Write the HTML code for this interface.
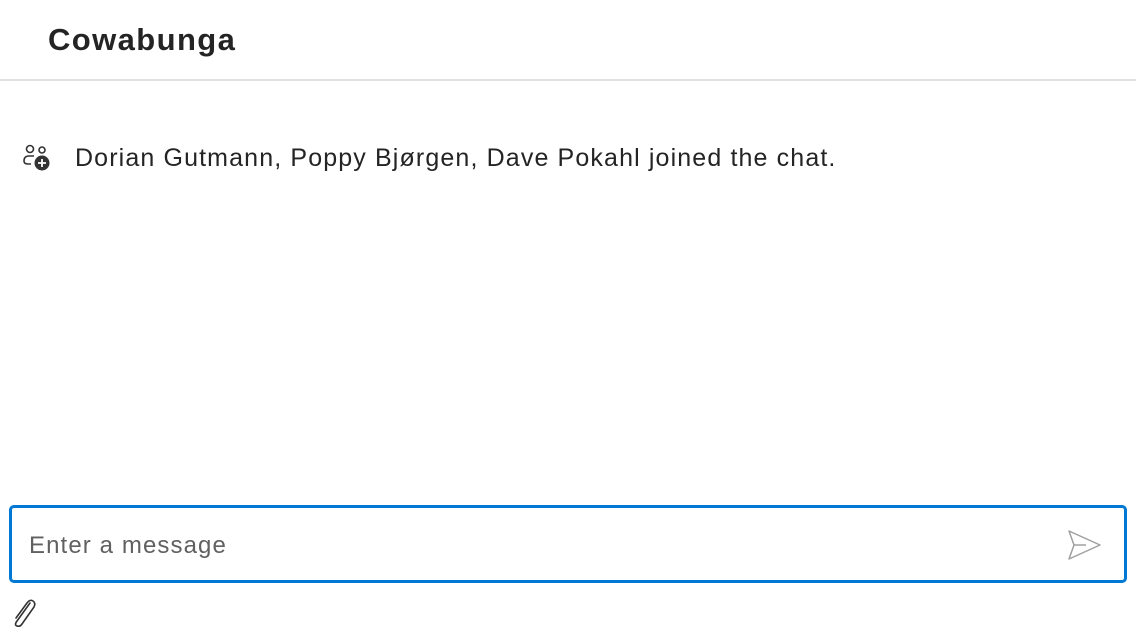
<!DOCTYPE html>
<html><head><style>
body{margin:0;width:1136px;height:640px;background:#fff;font-family:"Liberation Sans",sans-serif;position:relative;overflow:hidden}
.h{position:absolute;left:48px;top:22px;font-size:31px;font-weight:bold;color:#242424;letter-spacing:1.4px}
.line{position:absolute;left:0;top:79px;width:1136px;height:2px;background:#e0e0e0}
.msg{position:absolute;left:75px;top:144px;font-size:25px;color:#242424;letter-spacing:1.13px}
.box{position:absolute;left:9px;top:505px;width:1112px;height:72px;border:3px solid #0078d4;border-radius:5px}
.ph{position:absolute;left:29px;top:532px;font-size:24px;color:#616161;letter-spacing:1.1px}
</style></head><body>
<div class="h">Cowabunga</div>
<div class="line"></div>
<svg style="position:absolute;left:22px;top:144px" width="32" height="30" viewBox="0 0 32 30">
<circle cx="8" cy="5" r="3.5" fill="none" stroke="#333" stroke-width="1.6"/>
<circle cx="20" cy="6" r="3" fill="none" stroke="#333" stroke-width="1.6"/>
<path d="M2 17 Q2 12 7 12 L12 12 M2 17 Q2 20 6 20 L9 20" fill="none" stroke="#333" stroke-width="1.6"/>
<circle cx="20" cy="19" r="7.5" fill="#333"/>
<path d="M20 15v8M16 19h8" stroke="#fff" stroke-width="1.8"/>
</svg>
<div class="msg">Dorian Gutmann, Poppy Bjørgen, Dave Pokahl joined the chat.</div>
<div class="box"></div>
<div class="ph">Enter a message</div>
<svg style="position:absolute;left:1066px;top:529px" width="36" height="32" viewBox="0 0 36 32">
<path d="M3 2 L34 16 L3 30 L8 16 Z M8 16 H20" fill="none" stroke="#a0a0a0" stroke-width="1.5" stroke-linejoin="round"/>
</svg>
<svg style="position:absolute;left:8px;top:597px" width="32" height="32" viewBox="0 0 32 32">
<path d="M22 6 L9 24 Q6 28 9 29 Q12 30 14 27 L26 10 Q28 6 25 4 Q22 2 19 6 L8 21" fill="none" stroke="#333" stroke-width="1.6" stroke-linecap="round"/>
</svg>
</body></html>
